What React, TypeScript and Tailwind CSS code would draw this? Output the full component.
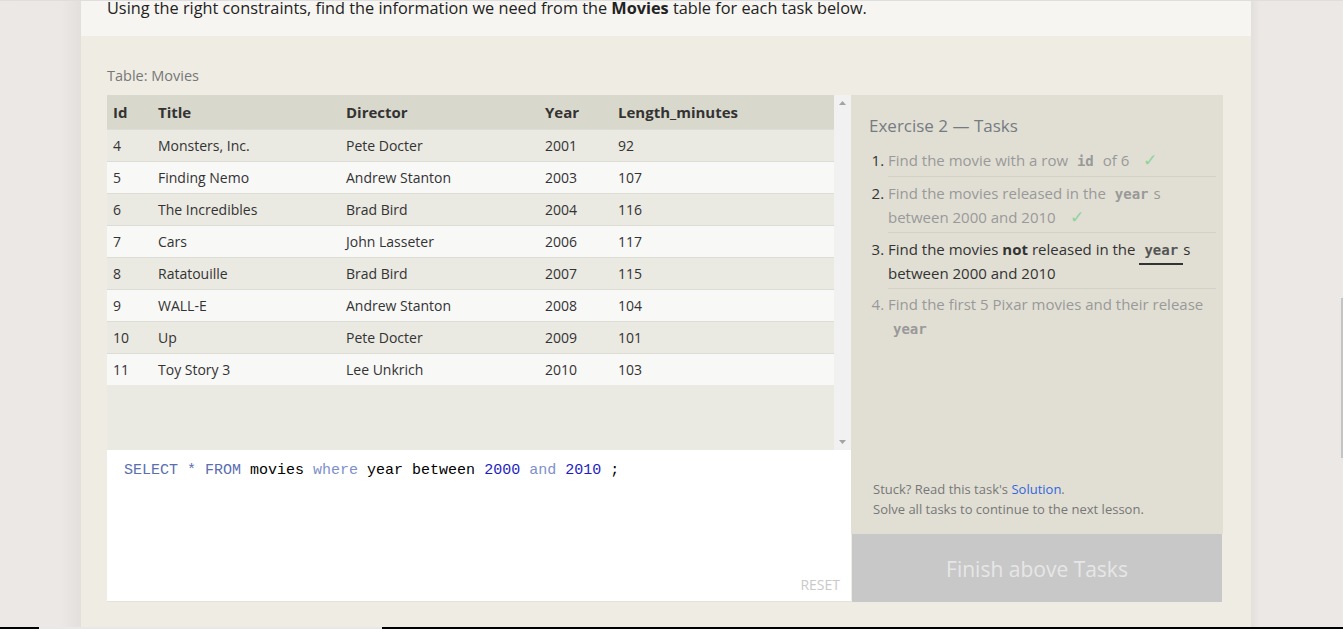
import React from 'react';

const rows = [
  { id: 4, title: 'Monsters, Inc.', director: 'Pete Docter', year: 2001, len: 92 },
  { id: 5, title: 'Finding Nemo', director: 'Andrew Stanton', year: 2003, len: 107 },
  { id: 6, title: 'The Incredibles', director: 'Brad Bird', year: 2004, len: 116 },
  { id: 7, title: 'Cars', director: 'John Lasseter', year: 2006, len: 117 },
  { id: 8, title: 'Ratatouille', director: 'Brad Bird', year: 2007, len: 115 },
  { id: 9, title: 'WALL-E', director: 'Andrew Stanton', year: 2008, len: 104 },
  { id: 10, title: 'Up', director: 'Pete Docter', year: 2009, len: 101 },
  { id: 11, title: 'Toy Story 3', director: 'Lee Unkrich', year: 2010, len: 103 },
];

function Code({ children, dark }: { children: React.ReactNode; dark?: boolean }) {
  return (
    <code
      className={`font-['DejaVu_Sans_Mono',monospace] text-[14px] leading-[0] font-bold px-[5px] ${
        dark ? 'text-[#555]' : 'text-[#999]'
      }`}
    >
      {children}
    </code>
  );
}

function Check() {
  return <span className="ml-[10px] text-[17px] leading-[0] text-[#8fd29c]">✓</span>;
}

export default function App() {
  return (
    <div className="h-[629px] w-full overflow-hidden flex flex-col bg-[#ece8e5] font-['Open_Sans',sans-serif]">
      <div className="flex flex-1 min-h-0 border-t border-[#dedede]">
        {/* left gutter */}
        <div className="w-[81px] shrink-0 bg-gradient-to-r from-[#ece8e5] from-75% to-[#e3dfdc]" />

        {/* lesson column */}
        <main className="w-[1170px] shrink-0 bg-[#efece4] flex flex-col">
          <div className="h-[35px] bg-[#f6f5f1] px-[26px] overflow-hidden">
            <p className="-mt-[4px] text-[16.3px] leading-[22px] text-[#222]">
              Using the right constraints, find the information we need from the <b>Movies</b> table for each task below.
            </p>
          </div>

          <div className="px-[26px] pt-[30px]">
            <div className="text-[14.5px] leading-[20px] text-[#777] mb-[9px]">Table: Movies</div>

            <div className="flex">
              {/* table + editor */}
              <div className="w-[744px] flex flex-col">
                <div className="h-[355px] flex">
                  <div className="w-[727px] bg-[#eae9e2]">
                    <table className="w-full text-[14px] text-[#333] border-collapse">
                      <thead>
                        <tr className="h-[34px] bg-[#d9d8cc] text-left text-[15px]">
                          <th className="w-[51px] pl-[6px] font-bold">Id</th>
                          <th className="w-[188px] font-bold">Title</th>
                          <th className="w-[199px] font-bold">Director</th>
                          <th className="w-[73px] font-bold">Year</th>
                          <th className="font-bold">Length_minutes</th>
                        </tr>
                      </thead>
                      <tbody>
                        {rows.map((r, i) => (
                          <tr
                            key={r.id}
                            className={`h-[32px] border-t border-[#dddcd5] ${
                              i % 2 === 0 ? 'bg-[#eae9e2]' : 'bg-[#f8f8f7]'
                            }`}
                          >
                            <td className="pl-[6px]">{r.id}</td>
                            <td>{r.title}</td>
                            <td>{r.director}</td>
                            <td>{r.year}</td>
                            <td>{r.len}</td>
                          </tr>
                        ))}
                      </tbody>
                    </table>
                  </div>
                  {/* scrollbar */}
                  <div className="w-[17px] bg-[#f1f1f1] flex flex-col justify-between items-center py-[6px]">
                    <svg width="7" height="4" viewBox="0 0 7 4">
                      <path d="M0 4 L3.5 0 L7 4 Z" fill="#a3a3a3" />
                    </svg>
                    <svg width="7" height="4" viewBox="0 0 7 4">
                      <path d="M0 0 L3.5 4 L7 0 Z" fill="#a3a3a3" />
                    </svg>
                  </div>
                </div>

                <div className="h-[152px] bg-white border-b border-[#e4e2da] relative px-[17px] pt-[11px]">
                  <pre className="font-['Liberation_Mono',monospace] text-[15px] leading-[20px] text-black">
                    <span className="text-[#5a6eb0]">SELECT * FROM</span> movies{' '}
                    <span className="text-[#7d90cc]">where</span> year between{' '}
                    <span className="text-[#1d1dc5]">2000</span> <span className="text-[#7d90cc]">and</span>{' '}
                    <span className="text-[#1d1dc5]">2010</span> ;
                  </pre>
                  <div className="absolute right-[11px] bottom-[6px] text-[14px] text-[#c9c9c9]">RESET</div>
                </div>
              </div>

              {/* tasks panel */}
              <div className="w-[372px] flex flex-col">
                <div className="h-[439px] bg-[#e1dfd4] flex flex-col pl-[18px] pr-[7px] pt-[20px] pb-[15px]">
                  <h2 className="text-[17px] leading-[22px] text-[#767b82] mb-[7px]">Exercise 2 — Tasks</h2>
                  <ol className="list-decimal pl-[19px] text-[15px] leading-[24px] marker:text-[#333]">
                    <li className="py-[4px] border-b border-[#d4d2c7] text-[#999]">
                      Find the movie with a row <Code>id</Code> of 6 <Check />
                    </li>
                    <li className="pt-[4px] pb-[3px] border-b border-[#d4d2c7] text-[#999]">
                      Find the movies released in the <Code>year</Code>s between 2000 and 2010 <Check />
                    </li>
                    <li className="pt-[4px] pb-[3px] border-b border-[#d4d2c7] text-[#333]">
                      Find the movies <b>not</b> released in the{' '}
                      <span className="border-b-2 border-[#333] pb-[4px]">
                        <Code dark>year</Code>
                      </span>
                      s between 2000 and 2010
                    </li>
                    <li className="pt-[3px] text-[#999] marker:text-[#999]">
                      Find the first 5 Pixar movies and their release <Code>year</Code>
                    </li>
                  </ol>
                  <div className="mt-auto pl-[4px] text-[13px] leading-[20px] text-[#777]">
                    <p>
                      Stuck? Read this task's <span className="text-[#3366dd]">Solution</span>.
                    </p>
                    <p>Solve all tasks to continue to the next lesson.</p>
                  </div>
                </div>
                <div className="h-[68px] mx-[1px] pt-[4px] bg-[#c8c8c8] flex items-center justify-center text-[21px] text-[#e6e6e6]">
                  Finish above Tasks
                </div>
              </div>
            </div>
          </div>
        </main>

        {/* right gutter */}
        <div className="flex-1 bg-gradient-to-r from-[#e3dfdc] to-[#ece8e5] to-[10%] relative">
          <div className="absolute right-0 top-[297px] h-[160px] w-[2px] bg-[#c4c4c4]" />
        </div>
      </div>
      <div className="h-[2px] flex">
        <div className="w-[39px] bg-black" />
        <div className="w-[343px] bg-[#e8e8e8]" />
        <div className="flex-1 bg-black" />
      </div>
    </div>
  );
}
